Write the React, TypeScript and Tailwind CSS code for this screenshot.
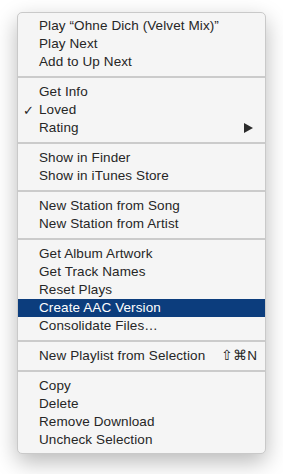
import React from 'react';

type Item = {
    label: string;
    checked?: boolean;
    submenu?: boolean;
    shortcut?: string;
    active?: boolean;
};

// 選單分組：每組之間畫分隔線
const groups: Item[][] = [
    [{ label: 'Play \u201COhne Dich (Velvet Mix)\u201D' }, { label: 'Play Next' }, { label: 'Add to Up Next' }],
    [{ label: 'Get Info' }, { label: 'Loved', checked: true }, { label: 'Rating', submenu: true }],
    [{ label: 'Show in Finder' }, { label: 'Show in iTunes Store' }],
    [{ label: 'New Station from Song' }, { label: 'New Station from Artist' }],
    [
        { label: 'Get Album Artwork' },
        { label: 'Get Track Names' },
        { label: 'Reset Plays' },
        { label: 'Create AAC Version', active: true },
        { label: 'Consolidate Files\u2026' },
    ],
    [{ label: 'New Playlist from Selection', shortcut: '\u21E7\u2318N' }],
    [{ label: 'Copy' }, { label: 'Delete' }, { label: 'Remove Download' }, { label: 'Uncheck Selection' }],
];

const MenuRow: React.FC<{ item: Item }> = ({ item }) => (
    <div
        className={`relative flex items-center h-[18px] pl-[21px] pr-[8px] ${item.active ? 'bg-[#0c3d7d] text-white' : 'text-[#262626]'}`}
    >
        {item.checked && (
            <span className="absolute left-[5px] top-0 h-[18px] flex items-center text-[13px] leading-none">✓</span>
        )}
        <span className="flex-1 whitespace-nowrap">{item.label}</span>
        {item.submenu && (
            <svg width="9" height="10" viewBox="0 0 9 10" className="mr-[4px]">
                <path d="M0 0 L9 5 L0 10 Z" fill="#2b2b2b" />
            </svg>
        )}
        {item.shortcut && <span className="whitespace-nowrap text-[13.5px]">{item.shortcut}</span>}
    </div>
);

export default function App() {
    return (
        <div className="w-[283px] h-[474px] bg-white pt-[12px] pl-[17px]">
            <div
                className="w-[249px] rounded-[5px] border border-[#c9c9c9] bg-[#f5f5f5] py-[4px] shadow-[0_8px_22px_rgba(0,0,0,0.28)] text-[13.5px] tracking-[0.1px]"
                style={{ fontFamily: '"Liberation Sans", Arial, sans-serif' }}
            >
                {groups.map((g, gi) => (
                    <div key={gi}>
                        {gi > 0 && (
                            <div className="h-[12px] flex items-center">
                                <div className="w-full h-[2px] bg-[#cbcbcb]" />
                            </div>
                        )}
                        {g.map((item) => (
                            <MenuRow key={item.label} item={item} />
                        ))}
                    </div>
                ))}
            </div>
        </div>
    );
}
